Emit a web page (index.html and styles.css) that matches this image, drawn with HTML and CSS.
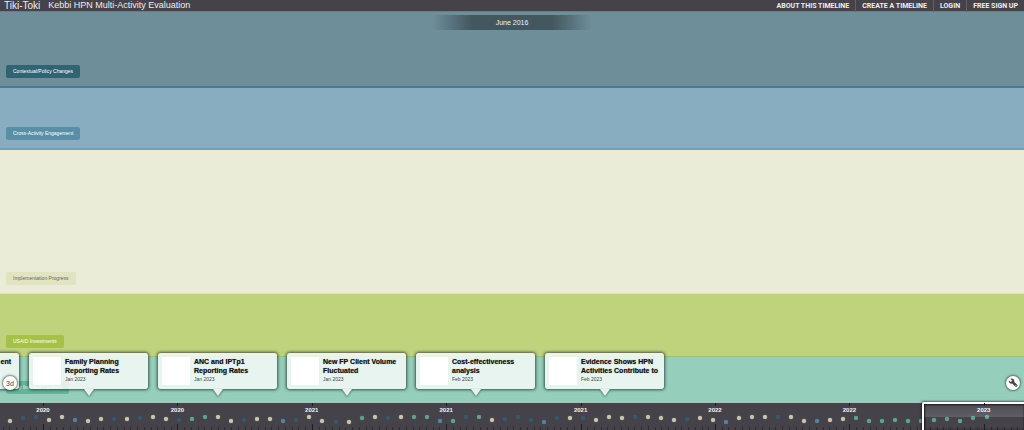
FILE: index.html
```html
<!DOCTYPE html>
<html lang="en">
<head>
<meta charset="utf-8">
<title>Kebbi HPN Multi-Activity Evaluation</title>
<link rel="stylesheet" href="styles.css">
</head>
<body>
<header class="topbar">
  <a class="brand" href="#">Tiki-Toki</a>
  <h1 class="title">Kebbi HPN Multi-Activity Evaluation</h1>
  <nav class="nav">
    <a href="#">ABOUT THIS TIMELINE</a>
    <a href="#">CREATE A TIMELINE</a>
    <a href="#">LOGIN</a>
    <a href="#">FREE SIGN UP</a>
  </nav>
</header>

<main class="stage">
  <section class="lane lane-policy"><h2 class="tag">Contextual/Policy Changes</h2></section>
  <section class="lane lane-engagement"><h2 class="tag">Cross-Activity Engagement</h2></section>
  <section class="lane lane-progress"><h2 class="tag">Implementation Progress</h2></section>
  <section class="lane lane-investments"><h2 class="tag">USAID Investments</h2></section>
  <section class="lane lane-updates"><h2 class="tag">Key Indicator Updates</h2></section>

  <div class="current-date">June 2016</div>

  <div class="cards">
    <article class="card card-cut"><div class="thumb"></div><div class="info"><h3>ent</h3></div></article>
    <article class="card"><div class="thumb"></div><div class="info"><h3>Family Planning Reporting Rates</h3><p>Jan 2023</p></div></article>
    <article class="card"><div class="thumb"></div><div class="info"><h3>ANC and IPTp1 Reporting Rates</h3><p>Jan 2023</p></div></article>
    <article class="card"><div class="thumb"></div><div class="info"><h3>New FP Client Volume Fluctuated</h3><p>Jan 2023</p></div></article>
    <article class="card"><div class="thumb"></div><div class="info"><h3>Cost-effectiveness analysis</h3><p>Feb 2023</p></div></article>
    <article class="card"><div class="thumb"></div><div class="info"><h3>Evidence Shows HPN Activities Contribute to</h3><p>Feb 2023</p></div></article>
  </div>

  <button class="round view-3d" type="button">3d</button>
  <button class="round settings" type="button" aria-label="Settings">
    <svg viewBox="0 0 20 20" width="10" height="10" aria-hidden="true">
      <path d="M2 5.5 5 8.2 7.8 7.4 8.3 4.7 5.5 2C8.5.8 12 2.5 12.2 6L12 8 18 13.6C19.6 15.4 17 18.4 15 16.8L9 10.8C5.500 12.200 1.500 9.500 2 5.500Z" fill="#444" stroke="#444"/>
      <circle cx="15.800" cy="15" r="1" fill="#fff"/>
    </svg>
  </button>
</main>

<footer class="scrubber">
  <div class="ticks"></div>
  <div class="dots"></div>
  <div class="viewport"></div>
  <div class="years"></div>
</footer>
<script src="timeline.js"></script>
</body>
</html>
```
FILE: styles.css
```css
* {
  box-sizing: border-box;
}

body {
  margin: 0;
  height: 100vh;
  display: flex;
  flex-direction: column;
  overflow: hidden;
  background: #46424a;
  font-family: "Liberation Sans", Arial, sans-serif;
}

h1, h2, h3, p {
  margin: 0;
  font-weight: normal;
}

a {
  color: inherit;
  text-decoration: none;
}

.topbar {
  display: flex;
  align-items: center;
  gap: 8px;
  height: 12px;
  padding: 0 0 0 4px;
  color: #f0eff1;
  border-bottom: 1px solid #77777f;
  line-height: 11px;
}

.brand {
  font-size: 10px;
}

.title {
  font-size: 9px;
}

.nav {
  display: flex;
  margin-left: auto;
  font-family: Roboto, sans-serif;
  font-size: 7px;
  font-weight: bold;
}

.nav a {
  padding: 1px 6px 0;
}

.nav a + a {
  border-left: 1px solid #625e66;
}

.stage {
  position: relative;
  flex: 1;
  display: grid;
  grid-template-rows: 76fr 62fr 144fr 63fr 46fr;
}

.lane {
  display: flex;
  align-items: flex-end;
  padding: 0 6px 8px;
  border-bottom: 1px solid;
}

.tag {
  padding: 0 7px;
  border-radius: 2px;
  font-size: 5px;
  line-height: 13px;
  color: #fff;
}

.lane-policy {
  background: #6e8e9a;
  border-color: #4d7a90;
  border-bottom-width: 2px;
}

.lane-policy .tag {
  background: #316373;
}

.lane-engagement {
  background: #89adc0;
  border-color: #739eb6;
  border-bottom-width: 2px;
}

.lane-engagement .tag {
  background: #588fa6;
}

.lane-progress {
  background: #eaecd7;
  border-color: #dfe3b8;
}

.lane-progress .tag {
  background: #e2e4c1;
  color: #66665c;
}

.lane-investments {
  background: #bfd37d;
  border-color: #a8c548;
}

.lane-investments .tag {
  background: #a6c148;
}

.lane-updates {
  background: #95cfbc;
  border-color: #95cfbc;
}

.lane-updates .tag {
  background: #65b59b;
}

.current-date {
  position: absolute;
  top: 3px;
  left: 50%;
  width: 160px;
  margin-left: -80px;
  text-align: center;
  font-size: 7px;
  line-height: 15px;
  color: #f2f5f5;
  background: linear-gradient(to right, transparent, #43575f 25%, #43575f 75%, transparent);
}

.cards {
  position: absolute;
  left: -100px;
  bottom: 14px;
  display: flex;
  gap: 10px;
}

.card {
  position: relative;
  display: flex;
  gap: 4px;
  width: 119px;
  padding: 4px;
  border-radius: 3px;
  background: rgba(247, 250, 248, 0.85);
  box-shadow: 0 0 3px 1px rgba(30, 40, 35, 0.75);
}

.card::after {
  content: "";
  position: absolute;
  top: 100%;
  left: 50%;
  margin-left: -5px;
  border: 5px solid transparent;
  border-top: 7px solid #e8f3ef;
  border-bottom: 0;
  filter: drop-shadow(0 1px 1px rgba(30, 40, 35, 0.6));
}

.thumb {
  flex: none;
  width: 28px;
  height: 28px;
  background: #fff;
}

.info {
  flex: 1;
  color: #111;
  white-space: nowrap;
}

.info h3 {
  width: 80px;
  white-space: normal;
  font-size: 7px;
  font-weight: bold;
  line-height: 9px;
  text-shadow: 0 0 1px rgba(0, 0, 0, 0.5);
}

.info p {
  font-size: 5px;
  line-height: 8px;
  color: #444;
}

.card-cut .info {
  display: flex;
  justify-content: flex-end;
  padding-right: 4px;
}

.card-cut h3 {
  width: auto;
}

.round {
  position: absolute;
  bottom: 13px;
  display: grid;
  place-items: center;
  width: 14px;
  height: 14px;
  padding: 0;
  border: 0;
  border-radius: 50%;
  background: #fff;
  color: #444;
  font: 7px "Liberation Sans", Arial, sans-serif;
  box-shadow: 0 0 2px 1px rgba(40, 50, 45, 0.6);
}

.view-3d {
  left: 3px;
}

.settings {
  right: 4px;
}

.scrubber {
  position: relative;
  flex: none;
  height: 27px;
  background: #46424a;
}

.ticks, .dots, .years {
  position: absolute;
  inset: 0;
}

.tick {
  position: absolute;
  bottom: 0;
  width: 1px;
  height: 3px;
  background: #2e2b32;
}

.tick-half {
  height: 4px;
}

.tick-year {
  height: 6px;
  background: #1f1c22;
}

.viewport {
  position: absolute;
  inset: -1px -3px -3px 90%;
  border: 2px solid #fff;
  border-radius: 2px;
  background: linear-gradient(rgba(255, 255, 255, 0.05), rgba(255, 255, 255, 0.15) 13px, transparent 13px);
  box-shadow: 0 0 2px 1px rgba(0, 0, 0, 0.5), inset 0 0 2px 1px rgba(0, 0, 0, 0.7);
}

.dot {
  position: absolute;
  width: 4px;
  height: 4px;
  margin: -2px;
  border-radius: 50%;
  box-shadow: 0 0 1px currentColor;
  background: currentColor;
}

.dot-c { color: #c9c8ad; }
.dot-d { color: #335b6e; }
.dot-b { color: #5286a0; }
.dot-g { color: #5ca68f; }

.year {
  position: absolute;
  top: 3px;
  width: 20px;
  margin-left: -10px;
  text-align: center;
  font-size: 6px;
  font-weight: bold;
  line-height: 8px;
  color: #f4f4f4;
}

.year::before {
  content: "";
  position: absolute;
  top: -3px;
  left: 10px;
  width: 1px;
  height: 3px;
  background: #1f1c22;
}
```
FILE: timeline.js
```js
const SPAN = 1024;
const FIRST_YEAR = 43;
const YEAR_STEP = 134.4;
const TICKS_PER_YEAR = 20;

const years = [2020, 2020, 2021, 2021, 2021, 2022, 2022, 2023];

// c: progress, d: policy, b: engagement, g: updates
const kinds =
  "cddccbccdcdccdggccdccb" +
  "dccdcgcdcggbgdgcdddb" +
  "dcdcccdcccdccbcccdccbcc" +
  "ggggggggggg";
const levels = [
  18, 15, 14, 17, 14, 17, 18, 16, 16, 16, 15, 14, 16, 17, 16, 14, 14, 18, 17, 16, 16, 18,
  17, 14, 18, 19, 19, 15, 14, 15, 14, 14, 14, 18, 18, 14, 14, 17, 16, 14, 17, 19,
  15, 15, 15, 17, 14, 15, 14, 14, 15, 17, 16, 15, 17, 19, 15, 14, 14, 14, 14, 18, 18, 17, 16,
  15, 18, 18, 17, 18, 18, 17, 16, 18, 15, 14
];

const pct = (x) => (x / SPAN * 100).toFixed(3) + "%";

function add(parent, className, x, text) {
  const el = document.createElement("span");
  el.className = className;
  el.style.left = pct(x);
  if (text) el.textContent = text;
  parent.appendChild(el);
  return el;
}

const ticks = document.querySelector(".ticks");
for (let i = -6; i <= years.length * TICKS_PER_YEAR; i++) {
  const x = FIRST_YEAR + i * YEAR_STEP / TICKS_PER_YEAR;
  if (x > SPAN) break;
  const kind = i % TICKS_PER_YEAR === 0 ? " tick-year" : i % 10 === 0 ? " tick-half" : "";
  add(ticks, "tick" + kind, x);
}

const dots = document.querySelector(".dots");
levels.forEach((level, i) => {
  const dot = add(dots, "dot dot-" + kinds[i], 10 + i * 13.02);
  dot.style.top = level + "px";
});

const labels = document.querySelector(".years");
years.forEach((year, i) => add(labels, "year", FIRST_YEAR + i * YEAR_STEP, String(year)));
```
